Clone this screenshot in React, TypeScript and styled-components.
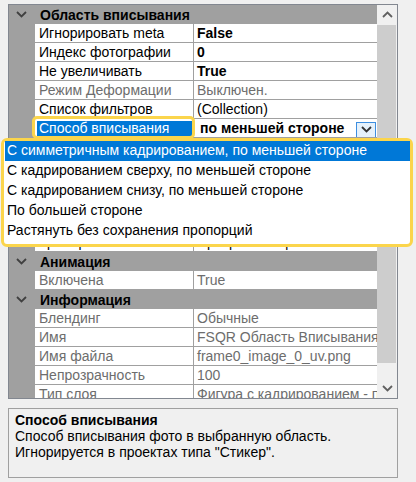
import React from 'react';
import styled, { createGlobalStyle } from 'styled-components';

const GlobalStyle = createGlobalStyle`
  html, body {
    margin: 0;
    background: #f0f0f0;
    font-family: "Liberation Sans", Arial, sans-serif;
    font-size: 14px;
    color: #000;
  }
  * { box-sizing: border-box; }
`;

type Prop = {
  name: string;
  value: string;
  bold?: boolean;
  muted?: boolean;
  selected?: boolean;
  combo?: boolean;
};

type Category = {
  title: string;
  rows: Prop[];
};

const categories: Category[] = [
  {
    title: 'Область вписывания',
    rows: [
      { name: 'Игнорировать meta', value: 'False', bold: true },
      { name: 'Индекс фотографии', value: '0', bold: true },
      { name: 'Не увеличивать', value: 'True', bold: true },
      { name: 'Режим Деформации', value: 'Выключен.', muted: true },
      { name: 'Список фильтров', value: '(Collection)' },
      { name: 'Способ вписывания', value: 'по меньшей стороне', bold: true, selected: true, combo: true },
      { name: 'Сдвиг по горизонтали', value: '0' },
      { name: 'Сдвиг по вертикали', value: '0' },
      { name: 'Масштаб', value: '100' },
      { name: 'Поворот', value: '0' },
      { name: 'Отражение', value: 'Нет' },
      { name: 'Цвет фона', value: 'Прозрачный фон' },
    ],
  },
  {
    title: 'Анимация',
    rows: [{ name: 'Включена', value: 'True', muted: true }],
  },
  {
    title: 'Информация',
    rows: [
      { name: 'Блендинг', value: 'Обычные', muted: true },
      { name: 'Имя', value: 'FSQR Область Вписывания', muted: true },
      { name: 'Имя файла', value: 'frame0_image_0_uv.png', muted: true },
      { name: 'Непрозрачность', value: '100', muted: true },
      { name: 'Тип слоя', value: 'Фигура с кадрированием - по меньшей стороне', muted: true },
    ],
  },
];

const options = [
  'С симметричным кадрированием, по меньшей стороне',
  'С кадрированием сверху, по меньшей стороне',
  'С кадрированием снизу, по меньшей стороне',
  'По большей стороне',
  'Растянуть без сохранения пропорций',
];

const Chevron: React.FC<{ up?: boolean; color?: string }> = ({ up, color = '#404040' }) => (
  <svg width="11" height="7" viewBox="0 0 11 7">
    <polyline
      points={up ? '1,6 5.5,1.5 10,6' : '1,1 5.5,5.5 10,1'}
      fill="none"
      stroke={color}
      strokeWidth="1.8"
    />
  </svg>
);

const App: React.FC = () => (
  <Page>
    <GlobalStyle />
    <Grid>
      <List>
        {categories.map(cat => (
          <React.Fragment key={cat.title}>
            <CategoryRow>
              <Toggle>
                <Chevron />
              </Toggle>
              {cat.title}
            </CategoryRow>
            {cat.rows.map(row => (
              <PropRow key={row.name}>
                <Margin />
                <NameCell muted={row.muted}>
                  {row.selected ? (
                    <>
                      <Highlight>{row.name}</Highlight>
                      <Annotation />
                    </>
                  ) : (
                    row.name
                  )}
                </NameCell>
                <ValueCell bold={row.bold} muted={row.muted}>
                  {row.combo ? (
                    <Combo>
                      <ComboText>{row.value}</ComboText>
                      <ComboButton>
                        <Chevron color="#333" />
                      </ComboButton>
                    </Combo>
                  ) : (
                    row.value
                  )}
                </ValueCell>
              </PropRow>
            ))}
          </React.Fragment>
        ))}
      </List>
      <Scrollbar>
        <ArrowButton>
          <Chevron up color="#606060" />
        </ArrowButton>
        <Thumb />
        <Track />
        <ArrowButton>
          <Chevron color="#606060" />
        </ArrowButton>
      </Scrollbar>
    </Grid>
    <Description>
      <DescTitle>Способ вписывания</DescTitle>
      <DescText>Способ вписывания фото в выбранную область.</DescText>
      <DescText>Игнорируется в проектах типа "Стикер".</DescText>
    </Description>
    <Popup>
      {options.map((opt, i) => (
        <Option key={opt} active={i === 0}>
          {opt}
        </Option>
      ))}
    </Popup>
  </Page>
);

export default App;

const Page = styled.div`
  position: relative;
  width: 416px;
  height: 482px;
  padding: 4px 0 0 8px;
  display: flex;
  flex-direction: column;
  gap: 9px;
`;

const Grid = styled.div`
  width: 390px;
  height: 395px;
  border: 1px solid #828790;
  display: flex;
  background: #fff;
`;

const List = styled.div`
  flex: 1;
  overflow: hidden;
  background: #a0a0a0;
`;

const CategoryRow = styled.div`
  height: 19px;
  display: flex;
  align-items: center;
  background: #a0a0a0;
  font-weight: bold;
  color: #000;
`;

const Toggle = styled.div`
  width: 31px;
  display: flex;
  justify-content: flex-start;
  padding-left: 7px;
`;

const PropRow = styled.div`
  display: grid;
  grid-template-columns: 26px 159px 1fr;
  height: 19px;
`;

const Margin = styled.div`
  background: #a0a0a0;
`;

const NameCell = styled.div<{ muted?: boolean }>`
  position: relative;
  background: #fff;
  border-bottom: 1px solid #a0a0a0;
  border-right: 1px solid #a0a0a0;
  padding-left: 4px;
  line-height: 18px;
  white-space: nowrap;
  overflow: visible;
  color: ${({ muted }) => (muted ? '#6d6d6d' : '#000')};
`;

const Highlight = styled.div`
  position: absolute;
  top: 2px;
  left: 2px;
  right: 1px;
  bottom: 1px;
  background: #0078d7;
  color: #fff;
  padding-left: 2px;
  line-height: 15px;
`;

const Annotation = styled.div`
  position: absolute;
  top: -3px;
  left: -3px;
  right: -2px;
  bottom: -2px;
  border: 3px solid #fbd54c;
  border-radius: 5px;
  z-index: 2;
`;

const ValueCell = styled.div<{ bold?: boolean; muted?: boolean }>`
  background: #fff;
  border-bottom: 1px solid #a0a0a0;
  padding-left: 3px;
  line-height: 18px;
  white-space: nowrap;
  overflow: hidden;
  font-weight: ${({ bold }) => (bold ? 'bold' : 'normal')};
  color: ${({ muted }) => (muted ? '#6d6d6d' : '#000')};
`;

const Combo = styled.div`
  display: flex;
  align-items: center;
  height: 18px;
  padding-left: 3px;
  padding-right: 1px;
`;

const ComboText = styled.span`
  flex: 1;
`;

const ComboButton = styled.div`
  width: 20px;
  height: 16px;
  margin-top: 3px;
  border: 1px solid #3d8ee0;
  background: #e5f1fb;
  display: flex;
  align-items: center;
  justify-content: center;
`;

const Scrollbar = styled.div`
  width: 20px;
  background: #f0f0f0;
  display: flex;
  flex-direction: column;
`;

const ArrowButton = styled.div`
  height: 19px;
  display: flex;
  align-items: center;
  justify-content: center;
  flex-shrink: 0;
`;

const Thumb = styled.div`
  height: 338px;
  margin: 1px 1px 0 0;
  background: #cdcdcd;
`;

const Track = styled.div`
  flex: 1;
`;

const Description = styled.div`
  width: 390px;
  height: 70px;
  border: 1px solid #a0a0a0;
  padding: 3px 6px;
  line-height: 16px;
`;

const DescTitle = styled.div`
  font-weight: bold;
`;

const DescText = styled.div``;

const Popup = styled.div`
  position: absolute;
  top: 138px;
  left: 1px;
  width: 412px;
  height: 109px;
  border: 3px solid #fbd54c;
  border-radius: 6px;
  background: #fff;
  padding: 0 0 0 1px;
  z-index: 3;
`;

const Option = styled.div<{ active?: boolean }>`
  height: 20px;
  line-height: 19px;
  padding-left: 2px;
  white-space: nowrap;
  background: ${({ active }) => (active ? '#0078d7' : 'transparent')};
  color: ${({ active }) => (active ? '#fff' : '#000')};
`;
